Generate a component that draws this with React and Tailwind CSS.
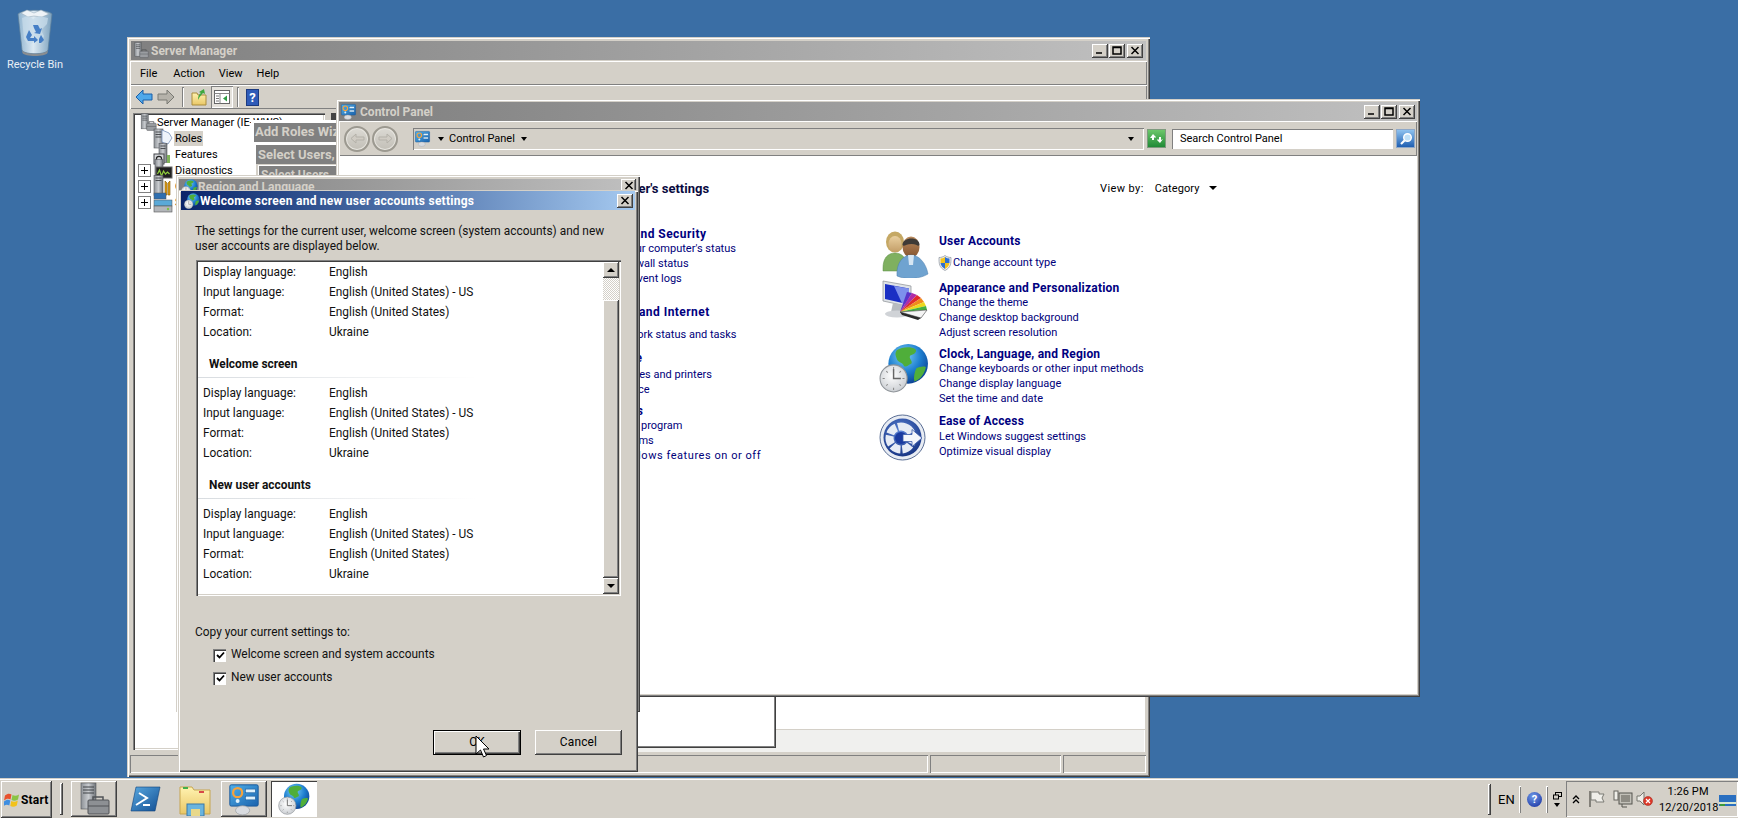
import React from "react";

const FRAME = "shadow-[inset_1px_1px_0_#d4d0c8,inset_2px_2px_0_#ffffff,inset_-1px_-1px_0_#404040,inset_-2px_-2px_0_#808080]";
const RAISED = "shadow-[inset_-1px_-1px_0_#404040,inset_1px_1px_0_#ffffff,inset_-2px_-2px_0_#808080]";
const SUNKEN = "shadow-[inset_1px_1px_0_#808080,inset_2px_2px_0_#404040,inset_-1px_-1px_0_#ffffff,inset_-2px_-2px_0_#d4d0c8]";
const THIN_IN = "shadow-[inset_1px_1px_0_#808080,inset_-1px_-1px_0_#ffffff]";
const THIN_OUT = "shadow-[inset_1px_1px_0_#ffffff,inset_-1px_-1px_0_#808080]";

const Glyph = ({ d, fill = "none" }) => (
  <svg width="10" height="9" viewBox="0 0 10 9"><path d={d} fill={fill} stroke={fill === "none" ? "#000" : "none"} strokeWidth="1.5" /></svg>
);
const WinBtn = ({ kind, sm }) => (
  <div className={`flex items-center justify-center bg-[#d4d0c8] ${RAISED} ${sm ? "w-[15px] h-[13px]" : "w-[16px] h-[14px]"}`}>
    {kind === "min" && <Glyph d="M1 7h6" />}
    {kind === "max" && <Glyph d="M1 1h8v7H1zM1 1.5h8" />}
    {kind === "close" && <Glyph d="M1.5 1l7 7M8.5 1l-7 7" />}
  </div>
);
const Triple = () => (
  <div className="flex ml-auto mr-[2px] gap-0">
    <WinBtn kind="min" /><div className="ml-[1px]"><WinBtn kind="max" /></div><div className="ml-[2px]"><WinBtn kind="close" /></div>
  </div>
);

const Defs = () => (
  <svg width="0" height="0" className="absolute">
    <defs>
      <radialGradient id="globe" cx="40%" cy="30%" r="75%"><stop offset="0" stopColor="#7fd0f5" /><stop offset=".55" stopColor="#1e7fd0" /><stop offset="1" stopColor="#0b3d8e" /></radialGradient>
      <radialGradient id="clockface" cx="45%" cy="40%" r="70%"><stop offset="0" stopColor="#ffffff" /><stop offset="1" stopColor="#c3c7cc" /></radialGradient>
      <linearGradient id="screen" x1="0" y1="0" x2="1" y2="1"><stop offset="0" stopColor="#4fb0ea" /><stop offset="1" stopColor="#1b63ad" /></linearGradient>
      <linearGradient id="steel" x1="0" y1="0" x2="1" y2="0"><stop offset="0" stopColor="#8d9196" /><stop offset=".5" stopColor="#c9ccd0" /><stop offset="1" stopColor="#6f7378" /></linearGradient>
      <linearGradient id="folder" x1="0" y1="0" x2="0" y2="1"><stop offset="0" stopColor="#fff2b0" /><stop offset="1" stopColor="#e9c766" /></linearGradient>
      <linearGradient id="ps" x1="0" y1="0" x2="1" y2="1"><stop offset="0" stopColor="#5aa9e0" /><stop offset="1" stopColor="#124f94" /></linearGradient>
      <linearGradient id="bin" x1="0" y1="0" x2="1" y2="0"><stop offset="0" stopColor="#8fb3cf" /><stop offset=".45" stopColor="#dce9f2" /><stop offset="1" stopColor="#7ba1be" /></linearGradient>
      <radialGradient id="ease" cx="45%" cy="35%" r="70%"><stop offset="0" stopColor="#5c84d8" /><stop offset="1" stopColor="#13307f" /></radialGradient>
      <linearGradient id="skinA" x1="0" y1="0" x2="0" y2="1"><stop offset="0" stopColor="#e9cf9f" /><stop offset="1" stopColor="#c39e68" /></linearGradient>
      <linearGradient id="skinB" x1="0" y1="0" x2="0" y2="1"><stop offset="0" stopColor="#b98a5e" /><stop offset="1" stopColor="#86552f" /></linearGradient>
    </defs>
  </svg>
);

const CpIcon = ({ s = 20 }) => (
  <svg width={s} height={s} viewBox="0 0 24 24" className="block shrink-0">
    <rect x="2" y="2" width="20" height="15" rx="1" fill="url(#screen)" stroke="#1a5a9c" strokeWidth=".7" />
    <circle cx="7.5" cy="7.5" r="3.2" fill="none" stroke="#f5a23c" strokeWidth="1.6" />
    <circle cx="7.5" cy="13.4" r="1.4" fill="#dff1fb" />
    <rect x="13" y="5" width="7" height="2.6" fill="#dff1fb" stroke="#1a5a9c" strokeWidth=".4" />
    <rect x="13" y="10" width="7" height="2.6" fill="#dff1fb" stroke="#1a5a9c" strokeWidth=".4" />
    <ellipse cx="11" cy="20" rx="5" ry="3.2" fill="#d9dce0" stroke="#9a9ea3" strokeWidth=".5" />
  </svg>
);
const GlobeClock = ({ s = 20 }) => (
  <svg width={s} height={s} viewBox="0 0 48 48" className="block shrink-0">
    <circle cx="28" cy="20" r="19" fill="url(#globe)" />
    <path d="M17 7c5-3 13-4 18-1 2 3-2 5-5 6-2 3 3 5 1 8-3 1-5 4-7 2-1-4-6-3-7-7-1-3-2-5 0-8zM36 24c3-1 6-2 9-1-1 6-5 12-11 14-1-4 0-9 2-13z" fill="#4fae3a" />
    <circle cx="14" cy="34" r="13" fill="url(#clockface)" stroke="#8f9499" strokeWidth="1" />
    <path d="M14 25v9h7" fill="none" stroke="#666" strokeWidth="1.4" />
    <path d="M14 23v2M14 43v2M3.5 34h2M22.5 34h2M7 27l1.4 1.4M21 27l-1.4 1.4M7 41l1.4-1.4M21 41l-1.4-1.4" stroke="#888" strokeWidth="1" />
  </svg>
);
const ServerIcon = ({ s = 20 }) => (
  <svg width={s} height={s} viewBox="0 0 24 24" className="block shrink-0">
    <rect x="4" y="1" width="9" height="19" fill="url(#steel)" stroke="#55585c" strokeWidth=".6" />
    <path d="M5.5 4h6M5.5 6.5h6M5.5 9h6" stroke="#3f4246" strokeWidth=".9" />
    <rect x="11" y="13" width="12" height="9" rx="1" fill="#9a9da1" stroke="#505357" strokeWidth=".6" />
    <path d="M14 13v-2h6v2" fill="none" stroke="#505357" />
    <path d="M11 17h12" stroke="#505357" strokeWidth=".6" />
  </svg>
);
const RolesIcon = () => (
  <svg width="20" height="22" viewBox="0 0 20 22" className="block shrink-0">
    <rect x="1" y="2" width="9" height="19" fill="url(#steel)" stroke="#55585c" strokeWidth=".6" />
    <path d="M2.5 5h6M2.5 7.5h6M2.5 10h6" stroke="#3f4246" strokeWidth=".9" />
    <path d="M9 3l7 3 3 5-4 6-6-2z" fill="#eef3fa" stroke="#7892ba" strokeWidth=".8" />
  </svg>
);
const FeatIcon = () => (
  <svg width="20" height="22" viewBox="0 0 20 22" className="block shrink-0">
    <rect x="6" y="0.5" width="8" height="19" fill="url(#steel)" stroke="#55585c" strokeWidth=".6" />
    <path d="M7.5 3h5M7.5 5.5h5" stroke="#3f4246" strokeWidth=".9" />
    <rect x="1" y="11" width="10" height="10" fill="#d5d7da" stroke="#44474b" />
    <circle cx="6" cy="16" r="2.6" fill="none" stroke="#222" strokeWidth="1.2" />
    <rect x="14" y="12" width="3" height="8" fill="#7fb25a" />
  </svg>
);
const DiagIcon = () => (
  <svg width="20" height="22" viewBox="0 0 20 22" className="block shrink-0">
    <rect x="2" y="0.5" width="8" height="19" fill="url(#steel)" stroke="#55585c" strokeWidth=".6" />
    <rect x="3" y="8" width="16" height="11" fill="#202020" stroke="#666" />
    <path d="M4.5 15l2-4 2 6 2-5 2 3 2-2 2 2" fill="none" stroke="#8fce3c" strokeWidth="1.2" />
  </svg>
);
const ConfigIcon = () => (
  <svg width="20" height="22" viewBox="0 0 20 22" className="block shrink-0">
    <rect x="1" y="0.5" width="9" height="20" fill="url(#steel)" stroke="#55585c" strokeWidth=".6" />
    <path d="M2.5 3h6M2.5 5.5h6" stroke="#3f4246" strokeWidth=".9" />
    <path d="M12 6l2 2v12h-2zM17 6v14h-2V8z" fill="#e9a61a" stroke="#7a5300" strokeWidth=".6" />
  </svg>
);
const StorageIcon = () => (
  <svg width="20" height="22" viewBox="0 0 20 22" className="block shrink-0">
    <rect x="1" y="2" width="12" height="6" fill="#2f6fb0" stroke="#555" strokeWidth=".5" />
    <rect x="1" y="9" width="18" height="6" fill="#5aa9d8" stroke="#555" strokeWidth=".5" />
    <rect x="1" y="15" width="18" height="6" fill="#b3b6ba" stroke="#555" strokeWidth=".6" />
    <circle cx="15" cy="18" r="1.2" fill="#7fc242" />
  </svg>
);
const Plus = () => (
  <div className="w-[13px] h-[13px] border border-[#808080] bg-white flex items-center justify-center shrink-0">
    <svg width="9" height="9" viewBox="0 0 9 9"><path d="M1 4.5h7M4.5 1v7" stroke="#000" strokeWidth="1" /></svg>
  </div>
);

const RecycleBin = () => (
  <svg width="38" height="48" viewBox="0 0 38 48" className="block">
    <path d="M2 6c5-5 29-5 34 0l-4 36c-1 5-25 5-26 0z" fill="url(#bin)" stroke="#5e7f99" strokeWidth=".7" />
    <path d="M5 5l6-3 7 3 7-3 8 4-7 3-8-1-6 1z" fill="#eef3f7" stroke="#93a6b5" strokeWidth=".5" />
    <path d="M6 10l6-2 5 3 6-3 9 2-1 6-6 6 3 6-3 8-7-2-6 3-4-6z" fill="#c7dbea" opacity=".75" />
    <path d="M17 17l5 0 2 4 2-1-2 6-6-1 2-1-2-4zM13 22l3 5-2 3h4v-2l4 4-4 3v-2h-6l-2-4z" fill="#2f6fc0" opacity=".85" />
    <path d="M25 27l3 5-3 3h-2l0-4z" fill="#2f6fc0" opacity=".85" />
    <path d="M6 42c2 5 24 5 26 0l-.5 3c-2 4-23 4-25 0z" fill="#8a8d90" />
  </svg>
);

const ArrowIcon = ({ fill, stroke, flip }) => (
  <svg width="18" height="16" viewBox="0 0 18 16" className={`block ${flip ? "-scale-x-100" : ""}`}>
    <path d="M1 8l7-7v4h9v6H8v4z" fill={fill} stroke={stroke} strokeWidth="1" />
  </svg>
);

const TreeRow = ({ plus, icon, label, active }) => (
  <div className="h-[16px] flex items-center relative">
    <div className="w-[18px] shrink-0 ml-[3px]">{plus && <Plus />}</div>
    <div className="w-[21px] shrink-0 -ml-[3px] h-[16px] flex items-center">{icon}</div>
    <span className={`px-[1px] h-[15px] leading-[15px] ${active ? "bg-[#d4d0c8]" : ""}`}>{label}</span>
  </div>
);

const ServerManager = () => (
  <div className={`absolute left-[127px] top-[37px] w-[1023px] h-[740px] bg-[#d4d0c8] p-[3px] flex flex-col ${FRAME}`}>
    <div className="h-[19px] mt-[1px] mx-[1px] bg-gradient-to-r from-[#808080] to-[#c0c0c0] flex items-center pr-[1px] shrink-0">
      <div className="ml-[1px] w-[19px]"><ServerIcon s={17} /></div>
      <span className="font-bold text-[#d4d0c8] text-[12px]">Server Manager</span>
      <Triple />
    </div>
    <div className={`h-[24px] flex items-center mt-[1px] shrink-0 ${THIN_OUT}`}>
      <span className="ml-[10px]">File</span><span className="ml-[16px]">Action</span><span className="ml-[14px]">View</span><span className="ml-[14px]">Help</span>
    </div>
    <div className={`h-[24px] flex items-center shrink-0 ${THIN_OUT}`}>
      <div className="ml-[5px]"><ArrowIcon fill="#4fa8ea" stroke="#1b5fa8" /></div>
      <div className="ml-[4px]"><ArrowIcon fill="#b5b2aa" stroke="#7a7a74" flip /></div>
      <div className={`ml-[7px] w-[2px] h-[20px] ${THIN_IN}`} />
      <svg width="16" height="18" viewBox="0 0 16 18" className="ml-[7px] block"><path d="M1 5h5l1 2h8v10H1z" fill="url(#folder)" stroke="#a98c3c" /><path d="M7 12c0-4 1-6 3-7l-2-1 5-3 1 5-2-1c-1 1-3 3-5 7z" fill="#3ea83e" /></svg>
      <div className={`ml-[4px] w-[22px] h-[22px] bg-[#e5e2dc] flex items-center justify-center ${THIN_IN}`}>
        <svg width="16" height="14" viewBox="0 0 16 14"><rect x=".5" y=".5" width="15" height="13" fill="#fff" stroke="#666" /><path d="M.5 3.5h15M6 3.5v10" stroke="#888" /><path d="M9 8.500l4-3v6z" fill="#2f9d44" /><path d="M2 6h3M2 8.500h3M2 11h3" stroke="#777" /></svg>
      </div>
      <div className={`ml-[4px] w-[2px] h-[20px] ${THIN_IN}`} />
      <div className="ml-[7px] w-[13px] h-[17px] bg-[#2f5bb8] border border-[#1c3a80] text-white font-bold text-[13px] leading-[15px] text-center">?</div>
    </div>
    <div className="flex-1 flex min-h-0 pl-[3px] pr-[2px] pt-[4px]">
      <div className={`w-[192px] h-[637px] bg-white shrink-0 pt-[1px] ${SUNKEN} pl-[2px]`}>
        <div className="h-[16px] flex items-center -ml-[2px] pl-[5px]"><ServerIcon s={19} /><span className="whitespace-nowrap">Server Manager (IE-WWS)</span></div>
        <TreeRow icon={<RolesIcon />} label="Roles" active />
        <TreeRow icon={<FeatIcon />} label="Features" />
        <TreeRow plus icon={<DiagIcon />} label="Diagnostics" />
        <TreeRow plus icon={<ConfigIcon />} label="Configuration" />
        <TreeRow plus icon={<StorageIcon />} label="Storage" />
      </div>
      <div className="flex-1 ml-[6px] h-[639px] flex flex-col">
        <div className="flex-1 bg-white"><div className="w-[6px] h-[7px] bg-[#444444]" /></div>
        <div className="h-[23px] bg-[#f0f0ee] border-t border-[#d4d0c8] shadow-[inset_-1px_0_0_#ffffff]" />
      </div>
    </div>
    <div className="h-[18px] mb-[1px] flex shrink-0">
      <div className={`w-[798px] ${THIN_IN}`} /><div className={`ml-[2px] w-[131px] ${THIN_IN}`} /><div className={`ml-[2px] w-[83px] ${THIN_IN}`} />
    </div>
  </div>
);

const Wizard = () => (
  <>
    <div className={`absolute left-[251px] top-[120px] w-[525px] h-[628px] bg-white p-[3px] ${RAISED}`}>
      <div className="h-[19px] bg-[#808080] text-[#d4d0c8] font-bold text-[13px] leading-[18px] pl-[1px] whitespace-nowrap">Add Roles Wizard</div>
    </div>
    <div className={`absolute left-[255px] top-[144px] w-[330px] h-[400px] bg-[#d4d0c8] p-[1px] ${THIN_OUT}`}>
      <div className="h-[19px] bg-[#808080] text-[#d4d0c8] font-bold text-[13px] leading-[19px] pl-[2px] whitespace-nowrap">Select Users, Computers</div>
    </div>
    <div className={`absolute left-[258px] top-[165px] w-[330px] h-[300px] bg-[#d4d0c8] p-[1px] ${THIN_OUT}`}>
      <div className="h-[19px] bg-[#808080] text-[#d4d0c8] font-bold text-[12px] leading-[19px] pl-[2px] whitespace-nowrap">Select Users</div>
    </div>
  </>
);

const Cat = ({ title, links, gap = "", cls = "", tcls = "tracking-[0.2px]" }) => (
  <div className={cls}>
    <div className={`h-[14px] leading-[14px] text-[12px] font-bold text-[#000080] whitespace-nowrap ${tcls}`}>{title}</div>
    <div className={gap}>
      {links.map((l) => {
        const [txt, c = ""] = Array.isArray(l) ? l : [l];
        return <div key={txt} className={`h-[15px] leading-[15px] text-[#00007a] whitespace-nowrap ${c}`}>{txt}</div>;
      })}
    </div>
  </div>
);

const IconSlot = ({ children }) => <div className="w-[59px] h-0 shrink-0 -ml-[59px]">{children}</div>;

const Users = () => (
  <svg width="48" height="47" viewBox="0 0 48 47" className="block -mt-[3px] ml-[1px]">
    <ellipse cx="14" cy="11" rx="9" ry="10.500" fill="#c5a864" />
    <ellipse cx="14" cy="13" rx="6.500" ry="8" fill="url(#skinA)" />
    <path d="M2 37c0-10 5-15 12-15s12 5 12 15v3H2z" fill="#7fb060" stroke="#5a8c44" strokeWidth=".5" />
    <ellipse cx="30" cy="16" rx="8.500" ry="10.500" fill="url(#skinB)" />
    <path d="M21.500 14c0-8 17-9 17 0-1 2-3-1-8-1s-8 3-9 1z" fill="#3e3a36" />
    <path d="M16 45c-1-13 6-21 14-21s15 8 17 19c-8 5-22 6-31 2z" fill="#6fa3d0" stroke="#4a7cac" strokeWidth=".5" />
    <path d="M27 24h6l-1 10h-4z" fill="#d6e6f3" />
  </svg>
);
const Appearance = () => (
  <svg width="48" height="42" viewBox="0 0 48 42" className="block -mt-[2px]">
    <path d="M3 2l28 5v21L3 22z" fill="#dfe3e7" stroke="#8a8e92" strokeWidth=".7" />
    <path d="M5 5l24 4.500v16L5 20z" fill="#1a2fc4" />
    <path d="M14 7l15 2.500v16l-7-1.300z" fill="#7d90ec" />
    <path d="M13 24l10 2 2 7H11z" fill="#b8bcc0" />
    <ellipse cx="17" cy="35" rx="12" ry="3.500" fill="#d0d3d7" />
    <path d="M20 33L27 13l5 1z" fill="#5a34c8" />
    <path d="M20 33l12-19 5 2z" fill="#b02ca8" />
    <path d="M20 33l17-17 4 3z" fill="#e02c2c" />
    <path d="M20 33l21-14 3 4z" fill="#f08a1c" />
    <path d="M20 33l24-10 2 4z" fill="#ecd81e" />
    <path d="M20 33l26-6 1 4z" fill="#46b040" />
    <path d="M20 33l27-2-6 8z" fill="#f4f4f4" stroke="#444" strokeWidth=".6" />
    <path d="M20 33l21 6-3 2-16-5z" fill="#2a2a2a" />
  </svg>
);
const Ease = () => (
  <svg width="47" height="47" viewBox="0 0 47 47" className="block -ml-[1px]">
    <circle cx="23.500" cy="23.500" r="22.500" fill="#e8ecf3" stroke="#5b6f96" />
    <circle cx="23.500" cy="23.500" r="19" fill="url(#ease)" />
    <circle cx="22" cy="24" r="11.500" fill="none" stroke="#e6ebf5" strokeWidth="8" strokeDasharray="9 1.800" transform="rotate(-70 22 24)" />
    <circle cx="22" cy="24" r="6" fill="#1a3aa0" />
    <path d="M24 20.500h9v-5l10 8.500-10 8.500v-5h-9z" fill="#f4f6fb" stroke="#3a5aa8" strokeWidth=".8" />
  </svg>
);
const Shield = () => (
  <svg width="14" height="16" viewBox="0 0 14 16" className="block shrink-0 mr-[1px]">
    <path d="M7 .5c2 1.500 4 2 6 2 0 6 0 10-6 13-6-3-6-7-6-13 2 0 4-.5 6-2z" fill="#f0f0f0" stroke="#76808c" strokeWidth=".6" />
    <path d="M7 2c1.500 1 3 1.500 4.500 1.500V8H7z" fill="#2c6fd0" /><path d="M7 8h4.500c-.3 2.500-2 4.500-4.500 6z" fill="#f2c21c" />
    <path d="M7 2v6H2.500V3.500C4 3.500 5.500 3 7 2z" fill="#f2c21c" /><path d="M2.500 8H7v6c-2.500-1.500-4.200-3.500-4.500-6z" fill="#2c6fd0" />
  </svg>
);
const Round = ({ flip }) => (
  <div className="w-[26px] h-[26px] rounded-full bg-gradient-to-b from-[#dcdad4] to-[#c2bfb7] border-2 border-[#9c9990] shadow-[inset_0_0_0_1px_#e8e6e0] flex items-center justify-center shrink-0">
    <svg width="15" height="13" viewBox="0 0 15 13" className={flip ? "-scale-x-100" : ""}><path d="M1 6.500L6 2v3h8v3H6v3z" fill="#d0ccc4" stroke="#b4b1a9" /></svg>
  </div>
);

const Caret = ({ cls = "" }) => <div className={`w-0 h-0 border-l-[3px] border-r-[3px] border-t-[4px] border-l-transparent border-r-transparent border-t-black shrink-0 ${cls}`} />;

const LEFT_HEAD = "tracking-[0.45px]";

const ControlPanel = () => (
  <div className={`absolute left-[336px] top-[99px] w-[1084px] h-[598px] bg-[#d4d0c8] p-[3px] flex flex-col ${FRAME}`}>
    <div className="h-[19px] bg-gradient-to-r from-[#808080] to-[#c0c0c0] flex items-center shrink-0">
      <div className="w-[20px] ml-[1px]"><CpIcon s={17} /></div>
      <span className="font-bold text-[#d4d0c8] text-[12px]">Control Panel</span>
      <Triple />
    </div>
    <div className={`h-[35px] flex items-center shrink-0 pl-[5px] ${THIN_OUT}`}>
      <Round /><div className="ml-[2px]"><Round flip /></div>
      <div className={`ml-[15px] w-[731px] h-[22px] flex items-center ${THIN_IN}`}>
        <div className="ml-[1px]"><CpIcon s={17} /></div>
        <Caret cls="ml-[7px]" />
        <span className="ml-[5px]">Control Panel</span>
        <Caret cls="ml-[6px]" />
        <Caret cls="ml-auto mr-[10px]" />
      </div>
      <div className="ml-[3px] w-[19px] h-[19px] flex items-center justify-center border border-[#7e9a7e] bg-[linear-gradient(#6cc76a,#1f8a36)]">
        <svg width="15" height="13" viewBox="0 0 15 13"><path d="M1 6l3-4 3 3-1 1-1-1v3H3V6zM14 7l-3 4-3-3 1-1 1 1V5h2v3z" fill="#fff" /></svg>
      </div>
      <div className={`ml-[6px] w-[221px] h-[20px] bg-white flex items-center pl-[8px] ${THIN_IN}`}>Search Control Panel</div>
      <div className="ml-[3px] w-[19px] h-[19px] border border-[#8fa8c8] bg-[linear-gradient(#8ec2ef,#1f5fb2)] flex items-center justify-center">
        <svg width="14" height="14" viewBox="0 0 14 14"><circle cx="8.500" cy="5.500" r="3.800" fill="#bfe0f7" stroke="#fff" strokeWidth="1.400" /><path d="M5.500 8.500L2 12" stroke="#fff" strokeWidth="2.200" /></svg>
      </div>
    </div>
    <div className="flex-1 bg-white min-h-0 relative">
      <div className="flex pt-[25px] h-[67px]">
        <div className="ml-[185px] w-[576px] font-bold text-[13px] leading-[15px] text-[#0a0a40]">Adjust your computer's settings</div>
        <span className="leading-[16px] tracking-[0.4px]">View by:</span>
        <span className="ml-[11px] leading-[16px] tracking-[0.1px]">Category</span>
        <Caret cls="ml-[9px] mt-[5px] border-l-[4px] border-r-[4px]" />
      </div>
      <div className="flex">
        <div className="ml-[248px] w-[293px] pt-[4px]">
          <Cat tcls={LEFT_HEAD} title="System and Security" links={["Review your computer's status", "Check firewall status", "View the event logs"]} />
          <Cat tcls={LEFT_HEAD} cls="mt-[19px]" gap="mt-[8px]" title="Network and Internet" links={["View network status and tasks"]} />
          <Cat tcls={LEFT_HEAD} cls="mt-[9px]" gap="mt-[2px]" title="Hardware" links={["View devices and printers", "Add a device"]} />
          <Cat tcls={LEFT_HEAD} cls="mt-[7px]" title="Programs" links={["Uninstall a program", "Get programs", ["Turn Windows features on or off", "tracking-[0.55px]"]]} />
        </div>
        <div className="ml-[59px] pt-[11px]">
          <div className="flex"><IconSlot><Users /></IconSlot>
            <div><div className="h-[14px] leading-[14px] text-[12px] font-bold text-[#000080] tracking-[0.2px]">User Accounts</div>
              <div className="mt-[7px] -ml-[1px] h-[15px] flex items-center text-[#00007a]"><Shield />Change account type</div></div>
          </div>
          <div className="flex mt-[11px]"><IconSlot><Appearance /></IconSlot><Cat title="Appearance and Personalization" links={["Change the theme", "Change desktop background", "Adjust screen resolution"]} /></div>
          <div className="flex mt-[7px]"><IconSlot><div className="-mt-[4px] -ml-[1px]"><GlobeClock s={50} /></div></IconSlot><Cat title="Clock, Language, and Region" links={["Change keyboards or other input methods", "Change display language", "Set the time and date"]} /></div>
          <div className="flex mt-[8px]"><IconSlot><Ease /></IconSlot><Cat gap="mt-[1px]" title="Ease of Access" links={["Let Windows suggest settings", "Optimize visual display"]} /></div>
        </div>
      </div>
    </div>
  </div>
);

const RegionWin = () => (
  <div className={`absolute left-[176px] top-[175px] w-[464px] h-[537px] bg-[#d4d0c8] p-[3px] ${FRAME}`}>
    <div className="h-[19px] mt-[1px] bg-gradient-to-r from-[#808080] to-[#c0c0c0] flex items-start relative">
      <div className="ml-[2px]"><GlobeClock s={17} /></div>
      <span className="font-bold text-[#d4d0c8] text-[12px] leading-[17px]">Region and Language</span>
      <div className="ml-auto mr-[1px]"><WinBtn kind="close" sm /></div>
    </div>
  </div>
);

const SetRows = () => (
  <div>
    {[["Display language:", "English"], ["Input language:", "English (United States) - US"], ["Format:", "English (United States)"], ["Location:", "Ukraine"]].map(([a, b]) => (
      <div key={a} className="h-[20px] leading-[20px] flex text-[#111]"><span className="w-[131px] pl-[5px]">{a}</span><span>{b}</span></div>
    ))}
  </div>
);
const SetHead = ({ label, cls }) => (
  <div className={cls}>
    <div className="h-[15px] leading-[15px] pl-[11px] font-bold text-[#111]">{label}</div>
    <div className="mt-[5px] h-[1px] w-[280px] bg-gradient-to-r from-[#d8dce0] to-white" />
  </div>
);
const Check = () => (
  <div className="w-[13px] h-[13px] bg-white shadow-[inset_1px_1px_0_#808080,inset_2px_2px_0_#404040] flex items-center justify-center shrink-0">
    <svg width="9" height="9" viewBox="0 0 9 9" className="ml-[1px] mt-[1px]"><path d="M1 4l2.500 2.500L8 1.500" fill="none" stroke="#000" strokeWidth="1.800" /></svg>
  </div>
);
const ScrollBtn = ({ down }) => (
  <div className={`h-[16px] w-[16px] bg-[#d4d0c8] flex items-center justify-center shrink-0 ${RAISED}`}>
    <div className={`w-0 h-0 border-l-[4px] border-r-[4px] border-l-transparent border-r-transparent ${down ? "border-t-[4px] border-t-black" : "border-b-[4px] border-b-black"}`} />
  </div>
);

const Dialog = () => (
  <div className={`absolute left-[178px] top-[190px] w-[460px] h-[582px] bg-[#d4d0c8] p-[3px] flex flex-col text-[11.9px] ${FRAME}`}>
    <div className="h-[19px] -mt-[2px] bg-gradient-to-r from-[#0a246a] to-[#a6caf0] flex items-center shrink-0">
      <div className="ml-[3px] w-[16px]"><GlobeClock s={16} /></div>
      <span className="font-bold text-white text-[12px] tracking-[0.25px]">Welcome screen and new user accounts settings</span>
      <div className="ml-auto mr-[2px]"><WinBtn kind="close" /></div>
    </div>
    <div className="mt-[14px] ml-[14px] leading-[15px] text-[#111] w-[420px]">
      The settings for the current user, welcome screen (system accounts) and new user accounts are displayed below.
    </div>
    <div className={`mt-[6px] ml-[15px] w-[425px] h-[336px] shrink-0 bg-white p-[2px] flex ${SUNKEN}`}>
      <div className="flex-1">
        <SetRows />
        <SetHead cls="mt-[15px]" label="Welcome screen" />
        <div className="mt-[5px]"><SetRows /></div>
        <SetHead cls="mt-[15px]" label="New user accounts" />
        <div className="mt-[5px]"><SetRows /></div>
      </div>
      <div className="w-[16px] flex flex-col">
        <ScrollBtn />
        <div className="h-[22px] bg-[repeating-conic-gradient(#d4d0c8_0%_25%,#ffffff_0%_50%)] bg-[length:2px_2px]" />
        <div className={`flex-1 bg-[#d4d0c8] ${RAISED}`} />
        <ScrollBtn down />
      </div>
    </div>
    <div className="mt-[29px] ml-[14px] leading-[15px] text-[#111]">Copy your current settings to:</div>
    <div className="mt-[8px] ml-[32px] h-[14px] flex items-center"><Check /><span className="ml-[5px] text-[#111]">Welcome screen and system accounts</span></div>
    <div className="mt-[9px] ml-[32px] h-[14px] flex items-center"><Check /><span className="ml-[5px] text-[#111]">New user accounts</span></div>
    <div className="mt-[45px] flex justify-end pr-[13px]">
      <div className="w-[88px] h-[25px] bg-[#d4d0c8] border border-black shadow-[inset_1px_1px_0_#ffffff,inset_-1px_-1px_0_#404040,inset_-2px_-2px_0_#808080] text-center leading-[23px]">OK</div>
      <div className={`ml-[14px] w-[87px] h-[25px] ${RAISED} text-center leading-[25px] tracking-[0.2px]`}>Cancel</div>
    </div>
  </div>
);

const Cursor = () => (
  <svg width="14" height="24" viewBox="0 0 14 24" className="absolute left-[475px] top-[735px]">
    <path d="M1 1v18l4.500-4 3 7 3-1.500-3-6.500H14z" fill="#fff" stroke="#000" strokeWidth="1" />
  </svg>
);

const TaskBtn = ({ children, active, cls = "" }) => (
  <div className={`w-[46px] h-[36px] flex items-center justify-center overflow-hidden shrink-0 ${active ? "bg-white shadow-[inset_1px_1px_0_#404040,inset_-1px_-1px_0_#ffffff]" : RAISED} ${cls}`}>{children}</div>
);
const Sep = ({ cls = "" }) => <div className={`w-[2px] h-[27px] shrink-0 ${THIN_OUT} ${cls}`} />;

const Taskbar = () => (
  <div className="h-[40px] bg-[#d4d0c8] flex items-start pt-[3px] shadow-[inset_0_1px_0_#d4d0c8,inset_0_2px_0_#ffffff] shrink-0">
    <div className={`ml-[1px] w-[51px] h-[37px] flex items-center shrink-0 ${RAISED}`}>
      <svg width="16" height="15" viewBox="0 0 16 15" className="ml-[3px]"><path d="M1 3.500c2.500-2 4.500-2 6.500-1L6.500 7.500c-2-1-4-1-6.500 1z" fill="#e8522e" /><path d="M8.500 3c2 1 4 1 6.500-.5l-1 5c-2.500 1.500-4.500 1.500-6.500.5z" fill="#8ac444" /><path d="M0 9.500c2.500-2 4.500-2 6.300-1l-1 5c-2-1-4-1-6.300 1z" fill="#3f8ee0" /><path d="M7.300 9c2 1 4 1 6.500-.5l-1 5c-2.500 1.500-4.500 1.500-6.500.5z" fill="#f2c21c" /></svg>
      <span className="ml-[1px] font-bold text-[12px] tracking-[0.2px]">Start</span>
    </div>
    <div className={`ml-[8px] mt-[2px] w-[3px] h-[32px] ${RAISED}`} />
    <TaskBtn cls="ml-[8px]">
      <svg width="34" height="34" viewBox="0 0 34 34"><rect x="4" y="1" width="15" height="26" fill="url(#steel)" stroke="#55585c" strokeWidth=".6" /><path d="M6 5h11M6 8h11M6 11h11" stroke="#3f4246" /><rect x="11" y="18" width="21" height="14" rx="1" fill="#8d9094" stroke="#505357" /><path d="M16 18v-3h10v3" fill="none" stroke="#505357" strokeWidth="1.500" /><path d="M11 24h21" stroke="#505357" /></svg>
    </TaskBtn>
    <div className="ml-[12px] w-[46px] h-[36px] flex items-center shrink-0">
      <svg width="32" height="26" viewBox="0 0 32 26"><path d="M7 1h24l-5 24H2z" fill="url(#ps)" stroke="#0d3f78" strokeWidth=".6" /><path d="M10 7l8 5-11 7" fill="none" stroke="#fff" strokeWidth="2" /><path d="M14 19h7" stroke="#fff" strokeWidth="2" /></svg>
    </div>
    <div className="ml-[4px] w-[34px] h-[36px] flex items-center shrink-0">
      <svg width="32" height="33" viewBox="0 0 32 33"><path d="M1 4h12l2 3h16v24H1z" fill="url(#folder)" stroke="#c6a550" /><rect x="4" y="4" width="5" height="2" fill="#42b04a" /><rect x="20" y="8" width="5" height="2" fill="#d84848" /><rect x="8" y="21" width="17" height="12" fill="#6ab4de" stroke="#3878a8" /><rect x="12" y="26" width="9" height="7" fill="#e8d88a" /></svg>
    </div>
    <TaskBtn cls="ml-[8px]"><CpIcon s={34} /></TaskBtn>
    <TaskBtn active cls="ml-[4px]"><GlobeClock s={32} /></TaskBtn>
    <div className="ml-auto flex items-center h-[36px]">
      <div className={`w-[3px] h-[31px] ${RAISED}`} />
      <span className="ml-[7px] text-[13px] w-[15px]">EN</span>
      <Sep cls="ml-[6px]" />
      <div className="ml-[6px] w-[15px] h-[15px] rounded-full bg-[radial-gradient(circle_at_40%_30%,#6f9ae8,#12299a)] text-white font-bold text-[11px] leading-[15px] text-center">?</div>
      <Sep cls="ml-[4px]" />
      <div className="ml-[4px] w-[10px] flex flex-col items-center gap-[3px]">
        <svg width="9" height="8" viewBox="0 0 9 8"><rect x="2.500" y=".5" width="6" height="4" fill="none" stroke="#000" /><rect x=".5" y="3" width="5" height="4" fill="#d4d0c8" stroke="#000" /></svg>
        <Caret />
      </div>
      <div className={`ml-[4px] w-[172px] h-[36px] flex items-center ${THIN_IN}`}>
        <svg width="8" height="9" viewBox="0 0 8 9" className="ml-[6px]"><path d="M1 4l3-3 3 3M1 8l3-3 3 3" fill="none" stroke="#000" strokeWidth="1.300" /></svg>
        <svg width="18" height="18" viewBox="0 0 18 18" className="ml-[8px]"><path d="M2 1v16" stroke="#6e6c66" strokeWidth="1.600" /><path d="M3 2h8v2h5l-2 4 2 4H8v-2H3z" fill="#efeee9" stroke="#7b7a74" /></svg>
        <svg width="20" height="18" viewBox="0 0 20 18" className="ml-[7px]"><rect x="6" y="3" width="13" height="11" fill="#c2c0b8" stroke="#55544f" /><rect x="8" y="5" width="9" height="7" fill="#8e8c84" /><path d="M9 14v3h5" stroke="#55544f" fill="none" /><rect x="1" y="1" width="4" height="9" fill="#efeee9" stroke="#66655f" /></svg>
        <svg width="17" height="18" viewBox="0 0 17 18" className="ml-[3px]"><path d="M1 6h3l4-4v13l-4-4H1z" fill="#efeee9" stroke="#77766f" /><circle cx="12" cy="11" r="4.500" fill="#dd3a2a" stroke="#a02016" strokeWidth=".5" /><path d="M10 9l4 4M14 9l-4 4" stroke="#fff" strokeWidth="1.200" /></svg>
        <div className="ml-[6px] mt-[2px] w-[58px] text-center leading-[16px] text-[11px] tracking-[0.1px]"><div>1:26 PM</div><div>12/20/2018</div></div>
        <svg width="17" height="11" viewBox="0 0 17 11" className="ml-[2px] mt-[2px]"><rect width="17" height="11" fill="#2a6fc0" /><rect y="7" width="17" height="2" fill="#d8e6d0" /><rect x="1" y="9" width="5" height="2" fill="#3a9a3a" /></svg>
      </div>
    </div>
  </div>
);

export default function App() {
  return (
    <div className="w-[1738px] h-[818px] overflow-hidden flex flex-col bg-[#3a6ea5] text-[11px] text-black font-['Roboto','Noto_Sans',sans-serif] leading-none">
      <Defs />
      <div className="relative flex-1 min-h-0">
        <div className="absolute left-[3px] top-[8px] w-[64px] flex flex-col items-center text-white">
          <RecycleBin />
          <span className="mt-[3px] whitespace-nowrap text-[#e8eef5]">Recycle Bin</span>
        </div>
        <ServerManager />
        <Wizard />
        <ControlPanel />
        <RegionWin />
        <Dialog />
      </div>
      <Taskbar />
      <Cursor />
    </div>
  );
}
